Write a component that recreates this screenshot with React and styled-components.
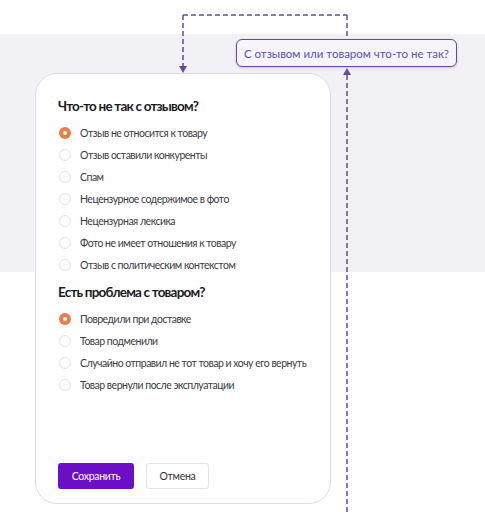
import React, { useState } from "react";
import styled, { createGlobalStyle } from "styled-components";

const Global = createGlobalStyle`
  html, body { margin: 0; padding: 0; background: #fff; }
  body { font-family: Lato, "Noto Sans", sans-serif; -webkit-font-smoothing: antialiased; }
  * { box-sizing: border-box; }
`;

const Page = styled.div`
  position: relative;
  width: 485px;
  height: 512px;
  overflow: hidden;
  padding: 73px 0 0 35px;
  background: linear-gradient(
    to bottom,
    #ffffff 0,
    #ffffff 34px,
    #f2f2f6 34px,
    #f2f2f6 272px,
    #ffffff 272px
  );
`;

const Card = styled.div`
  width: 296px;
  height: 431px;
  background: #fff;
  border: 1px solid #dcdce2;
  border-radius: 22px;
  padding: 23px 20px 14px 22px;
  display: flex;
  flex-direction: column;
`;

const Section = styled.div`
  display: flex;
  flex-direction: column;
  & + & { margin-top: 7px; }
`;

const Title = styled.div`
  font-size: 13.5px;
  font-weight: 700;
  letter-spacing: -0.8px;
  line-height: 18px;
  color: #1b1b1f;
  margin-bottom: 7px;
  white-space: nowrap;
`;

const Option = styled.label`
  display: flex;
  align-items: center;
  height: 22px;
  gap: 9px;
  padding-left: 1px;
  font-size: 10.5px;
  letter-spacing: -0.5px;
  color: #3c3c44;
  white-space: nowrap;
  cursor: pointer;
`;

const Radio = styled.span`
  width: 12px;
  height: 12px;
  border-radius: 50%;
  flex: none;
  position: relative;
  border: ${(p) => (p.$on ? "none" : "1px solid #e4e4e8")};
  background: ${(p) => (p.$on ? "#ee7d45" : "#fff")};
  &::after {
    content: "";
    display: ${(p) => (p.$on ? "block" : "none")};
    position: absolute;
    left: 4px;
    top: 4px;
    width: 4px;
    height: 4px;
    border-radius: 50%;
    background: #fff;
  }
`;

const Footer = styled.div`
  margin-top: auto;
  display: flex;
  gap: 12px;
`;

const Button = styled.button`
  height: 26px;
  padding: 0;
  width: ${(p) => (p.$primary ? "76px" : "63px")};
  border-radius: 3px;
  font-family: Lato, "Noto Sans", sans-serif;
  font-size: 10.5px;
  letter-spacing: -0.3px;
  cursor: pointer;
  background: ${(p) => (p.$primary ? "#6c0fc9" : "#fff")};
  color: ${(p) => (p.$primary ? "#fff" : "#333")};
  border: ${(p) => (p.$primary ? "none" : "1px solid #e3e3e8")};
`;

const Callout = styled.div`
  position: absolute;
  left: 236px;
  top: 39px;
  width: 221px;
  height: 28px;
  border: 1.5px solid #654a98;
  border-radius: 6px;
  background: #f7f5fb;
  box-shadow: 0 1px 3px rgba(80, 60, 130, 0.25);
  color: #5b51b3;
  font-size: 11.5px;
  display: flex;
  align-items: center;
  justify-content: center;
  white-space: nowrap;
`;

const Overlay = styled.svg`
  position: absolute;
  left: 0;
  top: 0;
  pointer-events: none;
`;

const reviewOptions = [
  "Отзыв не относится к товару",
  "Отзыв оставили конкуренты",
  "Спам",
  "Нецензурное содержимое в фото",
  "Нецензурная лексика",
  "Фото не имеет отношения к товару",
  "Отзыв с политическим контекстом",
];

const productOptions = [
  "Повредили при доставке",
  "Товар подменили",
  "Случайно отправил не тот товар и хочу его вернуть",
  "Товар вернули после эксплуатации",
];

function Group({ title, options, value, onChange }) {
  return (
    <Section>
      <Title>{title}</Title>
      {options.map((o, i) => (
        <Option key={o} onClick={() => onChange(i)}>
          <Radio $on={value === i} />
          {o}
        </Option>
      ))}
    </Section>
  );
}

export default function App() {
  const [a, setA] = useState(0);
  const [b, setB] = useState(0);
  const c = "#66489a";
  return (
    <Page>
      <Global />
      <Card>
        <Group title="Что-то не так с отзывом?" options={reviewOptions} value={a} onChange={setA} />
        <Group title="Есть проблема с товаром?" options={productOptions} value={b} onChange={setB} />
        <Footer>
          <Button $primary>Сохранить</Button>
          <Button>Отмена</Button>
        </Footer>
      </Card>
      <Callout>С отзывом или товаром что-то не так?</Callout>
      <Overlay width="485" height="512" viewBox="0 0 485 512">
        <g stroke={c} strokeWidth="1.5" strokeDasharray="5 3" fill="none">
          <path d="M183 15 H347" />
          <path d="M183 15 V66" />
          <path d="M347 15 V38" />
          <path d="M347 75 V512" />
        </g>
        <polygon points="179,66 187,66 183,73" fill={c} />
        <polygon points="343,75 351,75 347,68" fill={c} />
      </Overlay>
    </Page>
  );
}
